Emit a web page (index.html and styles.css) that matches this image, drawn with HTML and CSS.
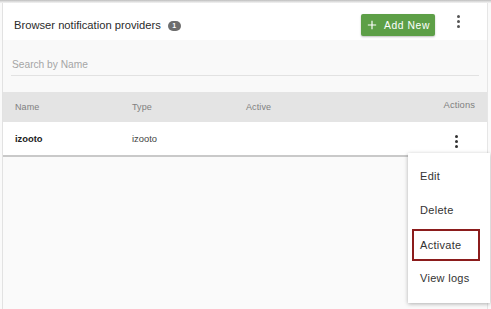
FILE: index.html
```html
<!DOCTYPE html>
<html>
<head>
<meta charset="utf-8">
<link rel="stylesheet" href="styles.css">
</head>
<body>
<div class="page">
  <div class="topshade"></div>
  <div class="header">
    <span class="title">Browser notification providers</span>
    <span class="badge">1</span>
    <button class="add-btn">
      <svg class="plus" viewBox="0 0 12 12" width="10" height="10"><path d="M6 1v10M1 6h10" stroke="#fff" stroke-width="1.4" fill="none"/></svg>
      <span>Add New</span>
    </button>
    <span class="kebab head-kebab"><i></i><i></i><i></i></span>
  </div>
  <div class="search">
    <div class="search-field">Search by Name</div>
  </div>
  <div class="table">
    <div class="thead">
      <span class="c-name">Name</span>
      <span class="c-type">Type</span>
      <span class="c-active">Active</span>
      <span class="c-actions">Actions</span>
    </div>
    <div class="trow">
      <span class="c-name bold">izooto</span>
      <span class="c-type">izooto</span>
      <span class="c-active"></span>
      <span class="c-actions"><span class="kebab row-kebab"><i></i><i></i><i></i></span></span>
    </div>
  </div>
</div>
<div class="menu">
  <div class="menu-item">Edit</div>
  <div class="menu-item">Delete</div>
  <div class="menu-item boxed">Activate</div>
  <div class="menu-item">View logs</div>
</div>
</body>
</html>
```
FILE: styles.css
```css
html, body {
  margin: 0;
  padding: 0;
  background: #fafafa;
  font-family: "Liberation Sans", Arial, Helvetica, sans-serif;
  color: #333;
}
body {
  width: 491px;
  height: 309px;
  overflow: hidden;
  position: relative;
}
.page {
  margin-left: 2px;
  width: 484px;
  height: 309px;
  border-left: 1px solid #e2e2e2;
  border-right: 1px solid #e6e6e6;
  background: #fafafa;
}
.topshade {
  height: 3px;
  margin-left: -3px;
  width: 491px;
  background: linear-gradient(#bdbdbd, #e2e2e2 60%, #f2f2f2);
}
.header {
  height: 30px;
  padding-top: 7px;
  background: #fff;
  display: flex;
  align-items: center;
  padding-left: 11px;
}
.title {
  font-size: 11.2px;
  color: #2b2b2b;
}
.badge {
  margin-left: 7px;
  width: 13px;
  height: 10px;
  border-radius: 5px;
  background: #6e6e6e;
  color: #fff;
  font-size: 7px;
  font-weight: bold;
  display: flex;
  align-items: center;
  justify-content: center;
  margin-top: 1px;
}
.add-btn {
  margin-left: auto;
  width: 74px;
  height: 22px;
  border: none;
  border-radius: 2px;
  background: #5d9f47;
  color: #fff;
  font-family: "Liberation Sans", Arial, Helvetica, sans-serif;
  font-size: 10.3px;
  letter-spacing: 0.6px;
  display: flex;
  align-items: center;
  justify-content: center;
  gap: 7px;
  padding: 0 0 0 1px;
  box-shadow: 0 1px 2px rgba(0,0,0,0.25);
}
.kebab {
  display: inline-flex;
  flex-direction: column;
  align-items: center;
  gap: 2px;
}
.kebab i {
  display: block;
  width: 3px;
  height: 3px;
  border-radius: 50%;
  background: #555;
}
.head-kebab {
  margin-left: 22px;
  margin-right: 27px;
  margin-top: -7px;
}
.search {
  height: 52px;
  background: #f9f9f9;
  padding: 0 8px 0 8px;
}
.search-field {
  padding-top: 19px;
  height: 16px;
  border-bottom: 1px solid #e2e2e2;
  font-size: 10.2px;
  color: #a5a5a5;
  padding-left: 1px;
}
.table {
  box-shadow: 0 2px 0 #c9c9c9;
}
.thead, .trow {
  display: grid;
  grid-template-columns: 117px 114px 1fr 80px;
  align-items: center;
  padding-left: 12px;
  padding-right: 12px;
}
.thead {
  height: 30px;
  background: #e4e4e4;
  font-size: 9px;
  color: #808080;
  letter-spacing: 0.1px;
}
.thead .c-actions {
  margin-top: -6px;
  font-size: 9.4px;
}
.trow {
  height: 33px;
  background: #fff;
  font-size: 9.4px;
  color: #444;
}
.bold {
  font-weight: bold;
  color: #222;
}
.c-actions {
  text-align: right;
}
.row-kebab {
  margin-right: 17px;
  margin-top: 1px;
}
.row-kebab i {
  background: #333;
}
.menu {
  position: absolute;
  left: 408px;
  top: 153px;
  width: 82px;
  padding: 6px 0 8px 0;
  background: #fff;
  box-shadow: 0 1px 4px rgba(0,0,0,0.3);
}
.menu-item {
  height: 34px;
  display: flex;
  align-items: center;
  padding-left: 12px;
  font-size: 11px;
  color: #333;
  letter-spacing: 0.3px;
}
.menu-item.boxed {
  height: 28px;
  margin: 2px 10px 0 4px;
  padding-left: 6px;
  border: 2px solid #8b1c1c;
}
```
